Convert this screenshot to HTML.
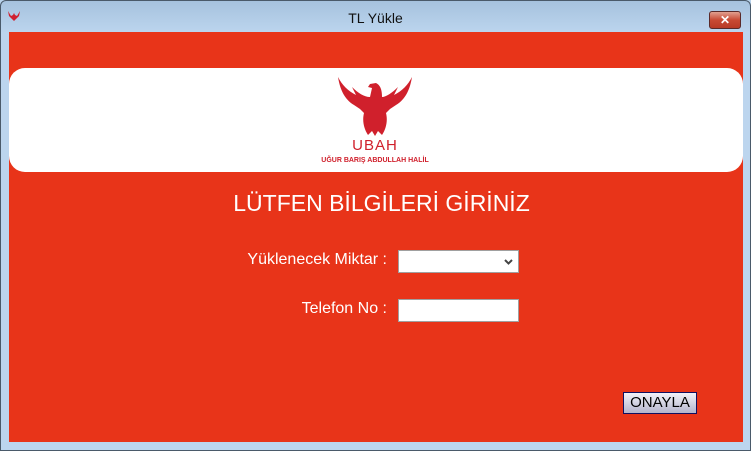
<!DOCTYPE html>
<html><head><meta charset="utf-8"><style>
*{margin:0;padding:0;box-sizing:border-box}
body{width:751px;height:451px;overflow:hidden;font-family:"Liberation Sans",sans-serif;background:#b9d3ec;position:relative}
.frame{position:absolute;left:0;top:0;width:751px;height:451px;border:1px solid #4a5a6a;border-radius:6px 6px 0 0;background:linear-gradient(#a6c2de 0,#bcd5ee 32px,#bcd5ee 100%)}
.title{position:absolute;top:10px;left:0;width:751px;text-align:center;font-size:14px;color:#111}
.close{position:absolute;left:709px;top:11px;width:32px;height:18px;border:1px solid #5a2a2a;border-radius:3px;background:linear-gradient(#e0a090,#c84a34 50%,#b83a26);color:#fff;font-weight:bold;font-size:12px;text-align:center;line-height:16px}
.red{position:absolute;left:9px;top:32px;width:734px;height:410px;background:#e83419}
.banner{position:absolute;left:9px;top:68px;width:734px;height:104px;background:#fff;border-radius:16px}
.h{position:absolute;top:190px;left:0;width:751px;text-align:center;color:#fff;font-size:23px;padding-left:12px}
.lbl{position:absolute;color:#fff;font-size:16px;text-align:right;width:200px}
.box{position:absolute;left:398px;width:121px;height:23px;background:#fff;border:1px solid #a0a0a0}
.btn{position:absolute;left:623px;top:392px;width:74px;height:22px;border:1px solid #101060;background:linear-gradient(#f2f2f8,#b4b4cc);font-size:15px;text-align:center;line-height:20px;color:#000}
</style></head><body>
<div class="frame"></div>
<svg style="position:absolute;left:7px;top:10px" width="14" height="16" viewBox="0 0 14 16"><path d="M1 1L4 6L6 5L7 3L8 5L10 6L13 1L12 6L9 9L7 11L5 9L2 6Z" fill="#d02030"/></svg>
<div class="title">TL Yükle</div>
<div class="close">✕</div>
<div class="red"></div>
<div class="banner"></div>
<svg style="position:absolute;left:336px;top:73px" width="78" height="66" viewBox="0 0 78 66">
<path d="M2 4C4 16 8 26 18 32L24 36L28 40C26 48 28 56 32 62L36 58L39 63L42 58L46 62C50 56 52 48 50 40L54 36L60 32C70 26 74 16 76 4C72 12 66 18 58 22L62 14C56 20 50 24 46 24C46 16 44 12 40 10L34 11L32 14L36 15L34 24C28 24 22 20 16 14L20 22C12 18 6 12 2 4Z" fill="#d0202c"/></svg>
<div style="position:absolute;left:300px;top:137px;width:150px;text-align:center;color:#d0202c;font-size:15px;letter-spacing:1px">UBAH</div>
<div style="position:absolute;left:300px;top:157px;width:150px;text-align:center;color:#d0202c;font-size:7px;font-weight:bold">UĞUR BARIŞ ABDULLAH HALİL</div>
<div class="h">LÜTFEN BİLGİLERİ GİRİNİZ</div>
<div class="lbl" style="left:187px;top:251px">Yüklenecek Miktar :</div>
<div class="box" style="top:250px"><svg style="position:absolute;right:5px;top:8px" width="9" height="6" viewBox="0 0 9 6"><path d="M1 1L4.5 4.5L8 1" stroke="#444" stroke-width="2" fill="none"/></svg></div>
<div class="lbl" style="left:187px;top:300px">Telefon No :</div>
<div class="box" style="top:299px"></div>
<div class="btn">ONAYLA</div>
</body></html>
